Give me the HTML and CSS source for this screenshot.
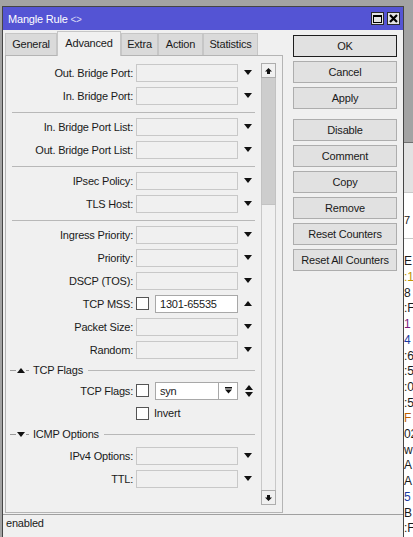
FILE: index.html
```html
<!doctype html>
<html lang="en">
  <head>
    <meta charset="UTF-8" />
    <meta name="viewport" content="width=device-width, initial-scale=1.0" />
    <title>Mangle Rule</title>
    <link rel="stylesheet" href="styles.css">
  </head>
  <body>
    <div class="desk">
      <div class="window">
        <div class="titlebar">
          <span class="title">Mangle Rule <span class="title-id">&lt;&gt;</span></span>
          <div class="wbtns">
            <span class="wbtn"><span class="max-icon"></span></span>
            <span class="wbtn">
              <svg width="9" height="9" viewBox="0 0 9 9"><path d="M1 1L8 8M8 1L1 8" stroke="#000" stroke-width="2.2"/></svg>
            </span>
          </div>
        </div>

        <div class="body">
          <div class="main">
            <div class="tabs">
              <div class="tab w-general">General</div>
              <div class="tab active w-advanced">Advanced</div>
              <div class="tab w-extra">Extra</div>
              <div class="tab w-action">Action</div>
              <div class="tab w-stats">Statistics</div>
            </div>

            <div class="panel">
              <div class="form">
                <div class="row"><label class="lbl">Out. Bridge Port:</label><span class="field"></span><span class="dd"></span></div>
                <div class="row"><label class="lbl">In. Bridge Port:</label><span class="field"></span><span class="dd"></span></div>
                <div class="sep"></div>
                <div class="row"><label class="lbl">In. Bridge Port List:</label><span class="field"></span><span class="dd"></span></div>
                <div class="row"><label class="lbl">Out. Bridge Port List:</label><span class="field"></span><span class="dd"></span></div>
                <div class="sep"></div>
                <div class="row"><label class="lbl">IPsec Policy:</label><span class="field"></span><span class="dd"></span></div>
                <div class="row"><label class="lbl">TLS Host:</label><span class="field"></span><span class="dd"></span></div>
                <div class="sep"></div>
                <div class="row"><label class="lbl">Ingress Priority:</label><span class="field"></span><span class="dd"></span></div>
                <div class="row"><label class="lbl">Priority:</label><span class="field"></span><span class="dd"></span></div>
                <div class="row"><label class="lbl">DSCP (TOS):</label><span class="field"></span><span class="dd"></span></div>
                <div class="row">
                  <label class="lbl">TCP MSS:</label>
                  <span class="check"></span>
                  <span class="field short active">1301-65535</span>
                  <span class="du"></span>
                </div>
                <div class="row"><label class="lbl">Packet Size:</label><span class="field"></span><span class="dd"></span></div>
                <div class="row"><label class="lbl">Random:</label><span class="field"></span><span class="dd"></span></div>

                <div class="grp">
                  <span class="dash"></span><span class="du"></span><span class="dash tail"></span>
                  <span class="gname">TCP Flags</span><span class="gline"></span>
                </div>
                <div class="row">
                  <label class="lbl">TCP Flags:</label>
                  <span class="check"></span>
                  <span class="field flags active">syn</span>
                  <span class="fbtn">
                    <svg width="7" height="7" viewBox="0 0 7 7"><path d="M0 0H7V1.5H0Z M0 2.5H7L3.5 6.5Z" fill="#111"/></svg>
                  </span>
                  <span class="updown"><span class="du"></span><span class="dd"></span></span>
                </div>
                <div class="row invert">
                  <span class="lbl"></span>
                  <span class="check"></span>
                  <span class="check-text">Invert</span>
                </div>

                <div class="grp icmp">
                  <span class="dash"></span><span class="dd"></span><span class="dash tail"></span>
                  <span class="gname">ICMP Options</span><span class="gline"></span>
                </div>
                <div class="row"><label class="lbl">IPv4 Options:</label><span class="field"></span><span class="dd"></span></div>
                <div class="row"><label class="lbl">TTL:</label><span class="field"></span><span class="dd"></span></div>
              </div>

              <div class="sbar">
                <span class="sbtn">
                  <svg width="7" height="6" viewBox="0 0 7 6"><path d="M3.5 0L7 3.5H5V6H2V3.5H0Z" fill="#111"/></svg>
                </span>
                <span class="thumb"></span>
                <span class="track"></span>
                <span class="sbtn">
                  <svg width="7" height="6" viewBox="0 0 7 6"><path d="M3.5 6L7 2.5H5V0H2V2.5H0Z" fill="#111"/></svg>
                </span>
              </div>
            </div>
          </div>

          <div class="actions">
            <button class="btn default">OK</button>
            <button class="btn">Cancel</button>
            <button class="btn spaced">Apply</button>
            <button class="btn">Disable</button>
            <button class="btn">Comment</button>
            <button class="btn">Copy</button>
            <button class="btn">Remove</button>
            <button class="btn">Reset Counters</button>
            <button class="btn">Reset All Counters</button>
          </div>
        </div>

        <div class="status">enabled</div>
      </div>

      <!-- rule list window sitting behind the dialog -->
      <div class="backwin">
        <div class="bw-toolbar"></div>
        <div class="bw-filter">7</div>
        <div class="bw-rows">
          <span>E</span>
          <span class="c-yellow">:1</span>
          <span>8</span>
          <span>:F</span>
          <span class="c-purple">1</span>
          <span class="c-blue">4</span>
          <span>:6</span>
          <span>:5</span>
          <span>:0</span>
          <span>:5</span>
          <span class="c-orange">F</span>
          <span>02</span>
          <span>w</span>
          <span>A</span>
          <span>A</span>
          <span class="c-blue">5</span>
          <span>B</span>
          <span>:F</span>
        </div>
      </div>
    </div>
  </body>
</html>
```

FILE: styles.css
```css
body {
  margin: 0;
  background: #a3a3a3;
  font-family: 'Liberation Sans', Arial, sans-serif;
  font-size: 11px;
  letter-spacing: -0.2px;
  color: #1a1a1a;
}
.desk {
  display: flex;
  height: 537px;
  padding: 6px 0 0 2px;
  box-sizing: border-box;
  overflow: hidden;
}

/* dialog window */
.window {
  width: 402px;
  flex: none;
  display: flex;
  flex-direction: column;
  background: #f0f0f0;
  border: 1px solid #454545;
  border-bottom: none;
  box-sizing: border-box;
}
.titlebar {
  height: 23px;
  flex: none;
  display: flex;
  align-items: center;
  justify-content: space-between;
  padding: 0 3px 0 5px;
  background: #5454d4;
  color: #fff;
}
.title-id {
  color: #d8d8f4;
  font-size: 10px;
}
.wbtns {
  display: flex;
  gap: 3px;
}
.wbtn {
  width: 13px;
  height: 13px;
  display: flex;
  align-items: center;
  justify-content: center;
  background: #e4e4e4;
  border: 1px solid #2a2a2a;
  box-sizing: border-box;
}
.max-icon {
  width: 9px;
  height: 8px;
  border: 1px solid #000;
  border-top-width: 2px;
  box-sizing: border-box;
}

.body {
  display: flex;
  flex: none;
  padding: 1px 0 0 2px;
}
.main {
  width: 278px;
}

/* tabs */
.tabs {
  display: flex;
  align-items: flex-end;
  height: 24px;
}
.tab {
  height: 22px;
  line-height: 21px;
  text-align: center;
  background: #dadada;
  border: 1px solid #c6c6c6;
  border-bottom: none;
  box-sizing: border-box;
}
.tab.active {
  height: 25px;
  line-height: 22px;
  margin-bottom: -1px;
  background: #f0f0f0;
  position: relative;
}
.w-general { width: 52px; }
.w-advanced { width: 64px; }
.w-extra { width: 37px; }
.w-action { width: 45px; }
.w-stats { width: 55px; }

.panel {
  height: 458px;
  display: flex;
  border: 1px solid #b4b4b4;
  box-sizing: border-box;
}
.form {
  width: 253px;
  padding-top: 5px;
}
.row {
  display: flex;
  align-items: center;
  height: 23px;
}
.lbl {
  width: 127px;
  flex: none;
  text-align: right;
  white-space: nowrap;
}
.field {
  width: 102px;
  height: 18px;
  margin-left: 3px;
  background: #f0f0f0;
  border: 1px solid #c8c8c8;
  box-sizing: border-box;
  padding: 0 4px;
  line-height: 16px;
}
.field.active {
  background: #fff;
  border-color: #a8a8a8;
}
.field.short {
  width: 83px;
  margin-left: 6px;
}
.field.flags {
  width: 64px;
  margin-left: 6px;
}
.fbtn {
  width: 19px;
  height: 18px;
  display: flex;
  align-items: center;
  justify-content: center;
  background: #fff;
  border: 1px solid #a8a8a8;
  border-left: none;
  box-sizing: border-box;
}
.check {
  width: 13px;
  height: 13px;
  margin-left: 3px;
  background: #fff;
  border: 1px solid #555;
  box-sizing: border-box;
}
.check-text {
  margin-left: 5px;
}

/* drop-down and spinner arrows */
.dd,
.du {
  width: 0;
  height: 0;
  border-left: 4px solid transparent;
  border-right: 4px solid transparent;
  margin-left: 6px;
}
.dd { border-top: 5px solid #111; }
.du { border-bottom: 5px solid #111; }
.updown {
  display: flex;
  flex-direction: column;
  gap: 2px;
  margin-left: 7px;
}
.updown .dd,
.updown .du {
  margin-left: 0;
}

.sep {
  height: 1px;
  margin: 5px 4px 2px 6px;
  background: #b8b8b8;
}
.grp {
  display: flex;
  align-items: center;
  height: 18px;
  padding: 0 4px;
}
.grp.icmp {
  height: 20px;
}
.grp .du,
.grp .dd {
  margin-left: 1px;
}
.dash {
  width: 6px;
  height: 1px;
  background: #9a9a9a;
}
.dash.tail {
  width: 3px;
  margin-left: 1px;
}
.gname {
  margin-left: 4px;
}
.gline {
  flex: 1;
  height: 1px;
  margin-left: 5px;
  background: #b8b8b8;
}
.row.invert {
  height: 22px;
}

/* vertical scroll bar */
.sbar {
  width: 15px;
  margin: 7px 6px 7px 2px;
  display: flex;
  flex-direction: column;
}
.sbtn {
  height: 15px;
  flex: none;
  display: flex;
  align-items: center;
  justify-content: center;
  background: #f0f0f0;
  border: 1px solid #adadad;
  box-sizing: border-box;
}
.thumb {
  height: 127px;
  flex: none;
  background: #cdcdcd;
  border: 1px solid #c2c2c2;
  border-top: none;
  box-sizing: border-box;
}
.track {
  flex: 1;
  background: #f0f0f0;
  border-left: 1px solid #c8c8c8;
  border-right: 1px solid #c8c8c8;
}

/* right-hand buttons */
.actions {
  display: flex;
  flex-direction: column;
  gap: 4px;
  margin: 4px 0 0 10px;
}
.btn {
  width: 104px;
  height: 22px;
  padding: 0;
  font: inherit;
  letter-spacing: inherit;
  color: #1a1a1a;
  background: #e1e1e1;
  border: 1px solid #adadad;
}
.btn.default {
  border-color: #1e1e1e;
}
.btn.spaced {
  margin-bottom: 6px;
}

.status {
  flex: 1;
  margin-top: 1px;
  padding: 2px 3px;
  border-top: 1px solid #a0a0a0;
  line-height: 13px;
}

/* list window behind */
.backwin {
  flex: 1;
  margin-top: 136px;
  display: flex;
  flex-direction: column;
  overflow: hidden;
  border-top: 1px solid #707070;
  white-space: nowrap;
}
.bw-toolbar {
  height: 52px;
  background: #e2e2e2;
  border-bottom: 1px solid #c8c8c8;
}
.bw-filter {
  height: 45px;
  line-height: 54px;
  background: #fff;
  border-bottom: 1px solid #c8c8c8;
}
.bw-rows {
  flex: 1;
  display: flex;
  flex-direction: column;
  padding-top: 15px;
  background: #fff;
  font-size: 12px;
  line-height: 15.7px;
}
.c-yellow { color: #c09400; }
.c-purple { color: #7a1a7a; }
.c-blue { color: #1a3aa0; }
.c-orange { color: #c06000; }
```
